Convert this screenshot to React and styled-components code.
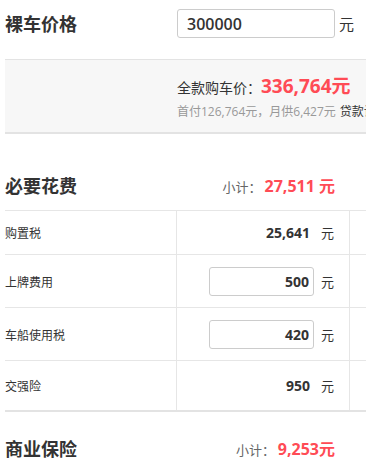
import React from 'react';
import styled, { createGlobalStyle } from 'styled-components';

const GlobalStyle = createGlobalStyle`
  body {
    margin: 0;
    overflow: hidden;
    background: #fff;
    font-family: "Open Sans", "Noto Sans CJK SC", sans-serif;
    color: #333;
  }
`;

const Page = styled.div`
  width: 700px;
  padding-left: 5px;
`;

const PriceRow = styled.div`
  display: grid;
  grid-template-columns: 172px auto 1fr;
  align-items: center;
  height: 29px;
  padding-top: 9px;
`;

const Title = styled.h2`
  margin: 0;
  font-size: 18px;
  font-weight: 700;
  height: ${(p) => p.lh || 42}px;
  line-height: ${(p) => p.lh || 42}px;
  color: #333;
  font-family: "Noto Sans CJK SC", sans-serif;
`;

const PriceInput = styled.input`
  box-sizing: border-box;
  width: 158px;
  height: 29px;
  border: 1px solid #ccc;
  border-radius: 3px;
  padding: 0 9px;
  font-family: "Open Sans", sans-serif;
  font-size: 16px;
  font-weight: 600;
  color: #333;
  outline: none;
  caret-color: #333;
`;

const Unit = styled.span`
  font-size: ${(p) => p.size || 13}px;
  color: #333;
  margin-left: ${(p) => p.gap || 0}px;
  font-family: "Noto Sans CJK SC", sans-serif;
`;

const SummaryBox = styled.div`
  margin-top: 21px;
  height: 72px;
  box-sizing: content-box;
  background: #f7f7f7;
  border-top: 1px solid #e3e3e3;
  border-bottom: 2px solid #e3e3e3;
  padding-left: 172px;
  display: flex;
  flex-direction: column;
  justify-content: flex-start;
  white-space: nowrap;
  overflow: hidden;
`;

const TotalLine = styled.div`
  display: flex;
  align-items: baseline;
  margin-top: 12px;
  height: 28px;
  line-height: 28px;
  font-size: 14px;
  color: #333;
  font-family: "Noto Sans CJK SC", sans-serif;
`;

const Red = styled.span`
  color: #ff4b55;
  font-weight: 700;
  font-size: ${(p) => p.size}px;
  font-family: "Open Sans", "Noto Sans CJK SC", sans-serif;
`;

const LoanLine = styled.div`
  margin-top: 2px;
  height: 20px;
  line-height: 20px;
  font-size: 12px;
  color: #999;
  font-family: "Open Sans", "Noto Sans CJK SC", sans-serif;
`;

const LoanLink = styled.a`
  color: #333;
  text-decoration: none;
  margin-left: 4px;
`;

const SectionHeader = styled.div`
  display: grid;
  grid-template-columns: 171px 174px;
  align-items: center;
  height: 42px;
  padding: ${(p) => p.top}px 0 4px;
`;

const Subtotal = styled.div`
  text-align: right;
  padding-right: 15px;
  font-size: 13px;
  color: #666;
  font-family: "Noto Sans CJK SC", sans-serif;
`;

const Table = styled.div`
  border-top: 1px solid #e6e6e6;
  border-bottom: 2px solid #e3e3e3;
`;

const Row = styled.div`
  display: grid;
  grid-template-columns: 171px 174px 1fr;
  height: ${(p) => p.h}px;
  border-bottom: ${(p) => (p.last ? 'none' : '1px solid #e6e6e6')};
`;

const Label = styled.div`
  display: flex;
  align-items: center;
  font-size: 12px;
  color: #333;
  font-family: "Noto Sans CJK SC", sans-serif;
`;

const ValueCell = styled.div`
  display: flex;
  align-items: center;
  justify-content: flex-end;
  gap: 7px;
  padding-right: 15px;
  border-left: 1px solid #e6e6e6;
  border-right: 1px solid #e6e6e6;
`;

const Value = styled.span`
  font-size: 14px;
  font-weight: 700;
  color: #333;
  margin-right: 4px;
`;

const FeeInput = styled.input`
  box-sizing: border-box;
  width: 105px;
  height: 29px;
  border: 1px solid #ccc;
  border-radius: 3px;
  padding: 0 4px;
  text-align: right;
  font-family: "Open Sans", sans-serif;
  font-size: 14px;
  font-weight: 700;
  color: #333;
  outline: none;
`;

const fees = [
  { label: '购置税', value: '25,641', h: 43 },
  { label: '上牌费用', value: '500', input: true, h: 52 },
  { label: '车船使用税', value: '420', input: true, h: 52 },
  { label: '交强险', value: '950', h: 49, last: true },
];

export default function App() {
  return (
    <>
      <GlobalStyle />
      <Page>
        <PriceRow>
          <Title lh={29}>裸车价格</Title>
          <PriceInput defaultValue="300000" autoFocus />
          <Unit size={15} gap={4}>元</Unit>
        </PriceRow>

        <SummaryBox>
          <TotalLine>
            全款购车价：<Red size={19}>336,764元</Red>
          </TotalLine>
          <LoanLine>
            首付126,764元，月供6,427元<LoanLink href="#">贷款计算器</LoanLink>
          </LoanLine>
        </SummaryBox>

        <SectionHeader top={30}>
          <Title>必要花费</Title>
          <Subtotal>
            小计： <Red size={16}>27,511 元</Red>
          </Subtotal>
        </SectionHeader>

        <Table>
          {fees.map((f) => (
            <Row key={f.label} h={f.h} last={f.last}>
              <Label>{f.label}</Label>
              <ValueCell>
                {f.input ? (
                  <FeeInput defaultValue={f.value} />
                ) : (
                  <Value>{f.value}</Value>
                )}
                <Unit>元</Unit>
              </ValueCell>
              <div />
            </Row>
          ))}
        </Table>

        <SectionHeader top={15}>
          <Title>商业保险</Title>
          <Subtotal>
            小计： <Red size={16}>9,253元</Red>
          </Subtotal>
        </SectionHeader>
      </Page>
    </>
  );
}
